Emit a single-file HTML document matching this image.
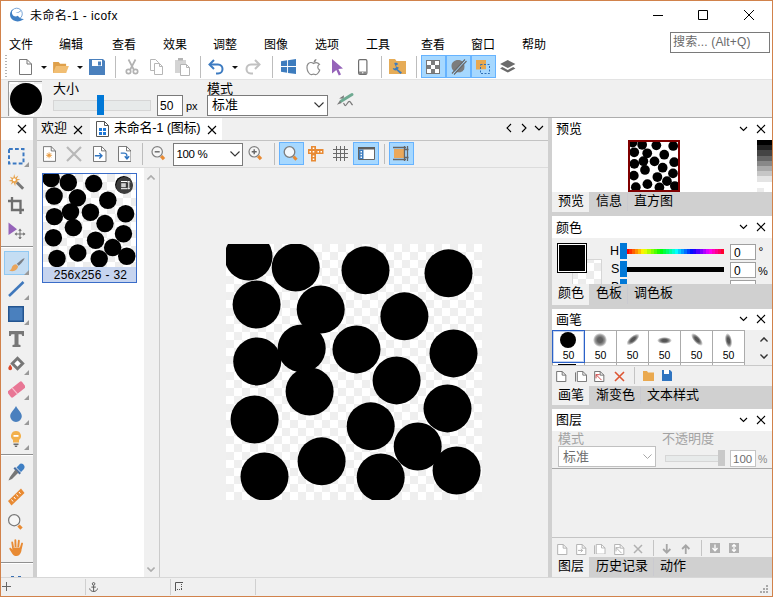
<!DOCTYPE html>
<html lang="zh-CN"><head><meta charset="utf-8"><title>未命名-1 - icofx</title>
<style>
html,body{margin:0;padding:0}
body{width:773px;height:597px;overflow:hidden;position:relative;background:#fff;font:12px/1 "Liberation Sans","Noto Sans CJK SC",sans-serif;color:#000}
.abs,.t,.b,svg.i{position:absolute}
.t{white-space:nowrap;line-height:16px;height:16px}
.b{box-sizing:border-box}
.g{color:#8e8e8e}
.vs{position:absolute;width:1px;background:#bdbdbd}
.tog{position:absolute;box-sizing:border-box;background:#a6d8ff;border:1px solid #66b3ff}
.inp{position:absolute;box-sizing:border-box;background:#fff;border:1px solid #7a7a7a}
.hdr{position:absolute;left:552px;width:220px;background:#fff}
.tabs{position:absolute;left:552px;width:220px;background:#d0d0d0}
.tabon{position:absolute;left:552px;background:#f0f0f0}
.cell{position:absolute;box-sizing:border-box;width:33px;height:33px;background:#fff;border:1px solid #ababab}
</style></head><body>
<!-- title bar -->
<svg class="i" style="left:8px;top:7px" width="17" height="16" viewBox="0 0 17 16"><circle cx="8.700" cy="6.800" r="5.600" fill="none" stroke="#6a9bd2" stroke-width=".9"/><path d="M5 2C1.300 4.500 .800 10.500 5.300 13.300c3.300 2 7.500 1.200 10.700-1.300-2.600.300-4.700-1-6.200-3.200C8 10.200 5.300 9.500 4.300 7.300 3.500 5.500 3.900 3.500 5 2z" fill="#3f7fc4"/><path d="M7.500 5.300c2 .300 4.300-.500 5.700-2.300-.700 2.300-3.300 3.400-5.700 2.300z" fill="#3f7fc4"/></svg>
<span class="t" style="left:30px;top:8px;letter-spacing:.45px">未命名-1 - icofx</span>
<svg class="i" style="left:652px;top:9px" width="104" height="12" viewBox="0 0 104 12" fill="none" stroke="#000" stroke-width="1"><path d="M1 6.500h10M46.500 1.500h9v9h-9zM92 1l10 10M102 1l-10 10"/></svg>
<!-- menu -->
<span class="t" style="left:9px;top:37px">文件</span>
<span class="t" style="left:59px;top:37px">编辑</span>
<span class="t" style="left:112px;top:37px">查看</span>
<span class="t" style="left:163px;top:37px">效果</span>
<span class="t" style="left:213px;top:37px">调整</span>
<span class="t" style="left:264px;top:37px">图像</span>
<span class="t" style="left:315px;top:37px">选项</span>
<span class="t" style="left:366px;top:37px">工具</span>
<span class="t" style="left:421px;top:37px">查看</span>
<span class="t" style="left:471px;top:37px">窗口</span>
<span class="t" style="left:522px;top:37px">帮助</span>
<div class="inp" style="left:670px;top:32px;width:100px;height:21px"></div>
<span class="t" style="left:673px;top:34px;color:#6a6a6a;letter-spacing:.15px">搜索... (Alt+Q)</span>
<!-- main toolbar -->

<svg class="i" style="left:5px;top:55px" width="2" height="24" viewBox="0 0 2 24" fill="#b3b3b3"><path d="M0 0h2v1H0zM0 3h2v1H0zM0 6h2v1H0zM0 9h2v1H0zM0 12h2v1H0zM0 15h2v1H0zM0 18h2v1H0zM0 21h2v1H0z"/></svg>
<svg class="i" style="left:18px;top:58px" width="16" height="18" viewBox="0 0 16 18"><path d="M1.500 1.500h7.500l4.500 4.500v10.500h-12z" fill="#fff" stroke="#777"/><path d="M9 1.500v4.500h4.500" fill="none" stroke="#777"/></svg>
<svg class="i" style="left:41px;top:66px" width="6" height="3" viewBox="0 0 6 3"><path d="M0 0h6L3 3z" fill="#111"/></svg>
<svg class="i" style="left:53px;top:61px" width="16" height="13" viewBox="0 0 17 14"><path d="M0 1h6l1.500 2H14v10H0z" fill="#dfa04a"/><path d="M3 5.500h14L14 13H0z" fill="#f1be73"/></svg>
<svg class="i" style="left:77px;top:66px" width="6" height="3" viewBox="0 0 6 3"><path d="M0 0h6L3 3z" fill="#111"/></svg>
<svg class="i" style="left:89px;top:59px" width="16" height="16" viewBox="0 0 16 16"><path d="M0 0h14l2 2v14H0z" fill="#4a80bd"/><path d="M3 1h10v6H3z" fill="#fff"/><path d="M9 2.500h3v4H9z" fill="#4a80bd"/></svg>
<div class="vs" style="left:115px;top:56px;height:22px"></div>
<svg class="i" style="left:125px;top:59px" width="14" height="16" viewBox="0 0 14 16" fill="none" stroke="#b2b2b2" stroke-width="1.700"><path d="M3.500 .500l5.500 10.500M10.500 .500L5 11"/><circle cx="3.500" cy="12.500" r="2.200"/><circle cx="10.500" cy="12.500" r="2.200"/></svg>
<svg class="i" style="left:149px;top:59px" width="15" height="16" viewBox="0 0 15 16" fill="#fff" stroke="#b6b6b6"><path d="M1.500 .500h5l3 3v8h-8z"/><path d="M5.500 4.500h5l3 3v8h-8z"/><path d="M10.500 4.500v3h3" fill="none"/></svg>
<svg class="i" style="left:174px;top:58px" width="17" height="18" viewBox="0 0 17 18"><path d="M1 2h11v13H1z" fill="#d4d4d4"/><path d="M4 0h5v2.500H4z" fill="#b4b4b4"/><path d="M6.500 6.500h6l3 3v8h-9z" fill="#fff" stroke="#b4b4b4"/><path d="M12.500 6.500v3h3" fill="none" stroke="#b4b4b4"/></svg>
<div class="vs" style="left:200px;top:56px;height:22px"></div>
<svg class="i" style="left:208px;top:59px" width="17" height="16" viewBox="0 0 17 16" fill="none" stroke="#3d7bc1" stroke-width="2"><path d="M6 1L1.500 5.500 6 10"/><path d="M2 5.500h8c6 0 6 9 0 9H8"/></svg>
<svg class="i" style="left:232px;top:66px" width="6" height="3" viewBox="0 0 6 3"><path d="M0 0h6L3 3z" fill="#111"/></svg>
<svg class="i" style="left:244px;top:59px" width="17" height="16" viewBox="0 0 17 16" fill="none" stroke="#c1c1c1" stroke-width="2"><path d="M11 1l4.500 4.500L11 10"/><path d="M15 5.500H7c-6 0-6 9 0 9h2"/></svg>
<div class="vs" style="left:272px;top:56px;height:22px"></div>
<svg class="i" style="left:281px;top:59px" width="15" height="15" viewBox="0 0 16 16" fill="#3d7cbe"><path d="M0 2.300L6.500 1.400v6.100H0zM7.500 1.200L16 0v7.500H7.500zM0 8.500h6.500v6.100L0 13.700zM7.500 8.500H16V16l-8.500-1.200z"/></svg>
<svg class="i" style="left:306px;top:58px" width="15" height="18" viewBox="0 0 15 18" fill="none" stroke="#8a8a8a" stroke-width="1.200"><path d="M7.500 5.500C6 4.300 3.500 4.300 2 6 .300 8 .800 12 2.500 14.500c1 1.500 2.300 2.500 3.500 2 1-.400 2-.400 3 0 1.200.500 2.500-.500 3.500-2 .600-.900 1-1.700 1.200-2.500-2.400-1-2.700-4.300-.200-5.700C12 4.600 9.500 4.200 7.500 5.500z"/><path d="M7.500 4.500c0-2 1.300-3.300 3-3.500 0 2-1.300 3.300-3 3.500z" fill="#8a8a8a" stroke="none"/></svg>
<svg class="i" style="left:331px;top:59px" width="13" height="17" viewBox="0 0 13 17"><path d="M1 0l11 9.500-4.600.600 2.600 5.400-2.200 1-2.500-5.500L1 14.500z" fill="#9563b9"/></svg>
<svg class="i" style="left:358px;top:59px" width="10" height="16" viewBox="0 0 10 16"><rect x=".6" y=".6" width="8.300" height="14.800" rx="1.300" fill="#fff" stroke="#6e6e6e" stroke-width="1.200"/><path d="M1 12.500h7.500v2.500H1z" fill="#8a8a8a"/><circle cx="4.750" cy="13.800" r=".7" fill="#fff"/></svg>
<div class="vs" style="left:381px;top:56px;height:22px"></div>
<svg class="i" style="left:389px;top:59px" width="17" height="15" viewBox="0 0 17 15"><path d="M0 0h6l1.500 2H17v13H0z" fill="#e6ac57"/><path d="M5.200 4.200c1.400-.8 3.200-.3 4 1l-2 1.100.4 1.700 2 .3c.1.900-.3 1.500-.9 2l4.300 3.200-1.500 1.500-4-3.700c-1.800.6-3.500-.6-3.700-2.300l2 .6 1.300-1.300z" fill="#3d7cbe"/></svg>
<div class="vs" style="left:416px;top:56px;height:22px"></div>
<div class="tog" style="left:421px;top:55px;width:25px;height:23px"></div>
<div class="tog" style="left:446px;top:55px;width:25px;height:23px"></div>
<div class="tog" style="left:471px;top:55px;width:25px;height:23px"></div>
<svg class="i" style="left:426px;top:60px" width="14" height="14" viewBox="0 0 14 14"><path d="M0 0h14v14H0z" fill="#fff"/><path d="M0 0h14v14H0z" fill="none" stroke="#757575" stroke-width="2"/><path d="M5 1h4v4H5zM1 5h4v4H1zM9 5h4v4H9zM5 9h4v4H5z" fill="#7d7d7d"/></svg>
<svg class="i" style="left:450px;top:58px" width="17" height="17" viewBox="0 0 17 17"><path d="M8 2c4 0 6.500 2.500 6.500 6.500 0 1-.3 1.500-.3 2.500s-1 1-1.200 1.700-1 .5-1.500 1-1 .3-1.700.6-1.300 0-2 0C4 14.300 1.500 11.500 1.500 8S4.500 2 8 2z" fill="#7c7c7c"/><path d="M2 15.500L15 1.500M4 16.500L16.500 3" stroke="#6a6a6a" stroke-width="1.200"/><path d="M3 16L15.700 2.300" stroke="#a6d8ff" stroke-width=".9"/></svg>
<svg class="i" style="left:476px;top:60px" width="15" height="15" viewBox="0 0 15 15"><path d="M0 0h10v9.500H0z" fill="#e9a84f"/><path d="M10 4v5.500H4.500V14h9V4z" fill="#a6d8ff"/><path d="M4.500 4.500h9v9h-9z" fill="none" stroke="#2f6fb7" stroke-dasharray="2 1.500"/></svg>
<svg class="i" style="left:500px;top:60px" width="15.500" height="13.500" viewBox="0 0 17 15" fill="#6b6b6b"><path d="M8.500 0L17 4.500 8.500 9 0 4.500z"/><path d="M2.500 7.800L0 9.500 8.500 14 17 9.500l-2.500-1.700-6 3.200z"/></svg>

<!-- options bar -->
<div class="abs" style="left:1px;top:79px;width:771px;height:1px;background:#e3e3e3;z-index:1"></div>
<div class="abs" style="left:1px;top:79px;width:771px;height:38px;background:#f0f0f0"></div>
<div class="b" style="left:8px;top:81px;width:34px;height:34.500px;background:conic-gradient(#fff 25%,#f1f1f1 0 50%,#fff 0 75%,#f1f1f1 0) 1px 2px/16px 16px;border-left:1px solid #999;border-top:1px solid #999"></div>
<div class="abs" style="left:10px;top:83px;width:32px;height:32px;border-radius:50%;background:#000"></div>
<span class="t" style="left:53px;top:81px;font-size:13px">大小</span>
<div class="b" style="left:53px;top:100px;width:98px;height:11px;background:#e7eaea;border:1px solid #d6d6d6"></div>
<div class="abs" style="left:97px;top:95px;width:7px;height:20px;background:#0078d7"></div>
<div class="inp" style="left:157px;top:95px;width:26px;height:21px"></div>
<span class="t" style="left:160px;top:98px">50</span>
<span class="t" style="left:186px;top:98px;font-size:11px">px</span>
<span class="t" style="left:207px;top:81px;font-size:13px">模式</span>
<div class="inp" style="left:207px;top:95px;width:121px;height:21px"></div>
<span class="t" style="left:212px;top:97px;font-size:13px">标准</span>
<svg class="i" style="left:314px;top:102px" width="10" height="6" viewBox="0 0 10 6" fill="none" stroke="#333" stroke-width="1.100"><path d="M.500 .500l4.500 4.500 4.500-4.500"/></svg>
<svg class="i" style="left:330px;top:86px" width="32" height="26" viewBox="0 0 32 26"><path d="M9.100 12.600l4.900-3.300-.400 3.500z" fill="#7a7a7a"/><path d="M13.500 17c.800 1 1 2.600 1.800 2.600 1.300 0 2.600-4.300 4-4.300 1.200 0 2 2.500 3.300 3.900" fill="none" stroke="#7a7a7a" stroke-width="1.200"/><path d="M11 15.200L22 8.500" stroke="#6faa92" stroke-width="3" stroke-linecap="round"/><path d="M6.900 18.700l3-3.900 1.700 2.300z" fill="#7a7a7a"/></svg>
<div class="abs" style="left:1px;top:117px;width:771px;height:1px;background:#adadad"></div>
<!-- left toolbox -->
<div class="abs" style="left:1px;top:118px;width:32px;height:22px;background:#fff"></div>
<div class="abs" style="left:1px;top:140px;width:32px;height:437px;background:#f0f0f0"></div>
<svg class="i" style="left:17px;top:124px" width="10" height="10" viewBox="0 0 10 10" stroke="#000" stroke-width="1.100"><path d="M1 1l8 8M9 1l-8 8"/></svg>

<div class="abs" style="left:1px;top:246px;width:32px;height:1px;background:#909090"></div><div class="abs" style="left:1px;top:247px;width:32px;height:1px;background:#fff"></div>
<div class="abs" style="left:1px;top:454px;width:32px;height:1px;background:#909090"></div><div class="abs" style="left:1px;top:455px;width:32px;height:1px;background:#fff"></div>
<div class="abs" style="left:1px;top:562px;width:32px;height:1px;background:#909090"></div><div class="abs" style="left:1px;top:563px;width:32px;height:1px;background:#fff"></div>
<div class="tog" style="left:4px;top:251px;width:25px;height:24px;background:#c4ddf3;border-color:#90c8f2"></div>
<svg class="i" style="left:8px;top:148px" width="17" height="17" viewBox="0 0 17 17" fill="none" stroke="#3a78c2" stroke-width="2" stroke-dasharray="3.800 2.200"><path d="M1 1h14.500v14.500H1z"/></svg>
<svg class="i" style="left:8px;top:174px" width="17" height="16" viewBox="0 0 18 18"><path d="M6.500 0l1 4.200 3.500-2.500-1.800 3.800 4.300.5-4 1.700 2.500 3.300-3.800-1.500-.7 4.200-1.700-4-3.300 2.500 1.700-3.700L0 7.800l4-1.500L1.500 3l3.800 1.500z" fill="#e8a24a"/><circle cx="6.500" cy="6.500" r="1.700" fill="#fff"/><path d="M9.500 9.500l7 7" stroke="#777" stroke-width="3.300"/></svg>
<svg class="i" style="left:8px;top:197px" width="16" height="17" viewBox="0 0 16 17" fill="none" stroke="#6e6e6e" stroke-width="2.300"><path d="M4 0v13h12M0 4h12.500v13"/></svg>
<svg class="i" style="left:8px;top:222px" width="18" height="17" viewBox="0 0 18 17"><path d="M.500 .500l8.500 6.700L.500 13z" fill="#9563b9"/><path d="M12 8v8M8 12h8" stroke="#6d6d6d" stroke-width="1"/><path d="M12 6.500l1.800 2.200h-3.600zM12 17.500l1.800-2.200h-3.600zM6.500 12l2.200-1.800v3.600zM17.500 12l-2.200-1.800v3.600z" fill="#6d6d6d"/></svg>
<svg class="i" style="left:9px;top:258px" width="16" height="14" viewBox="0 0 19 17"><path d="M18.500 .300c.8.800-4 6.500-7 9L9.300 7C12 4.500 17.700-.5 18.500 .300z" fill="#7a7f86"/><path d="M8.500 7.700l2.300 2.300c-.3 2.500-1.800 4.500-4.300 5.500-2 .8-4.500.6-6.500-.4 2-.5 2.600-1.300 3-3 .5-2.500 3-4.400 5.500-4.400z" fill="#e9a55c"/></svg>
<svg class="i" style="left:8px;top:281px" width="17" height="16" viewBox="0 0 17 16"><path d="M1 15L15.500 1" stroke="#3f78bc" stroke-width="2.500"/></svg>
<svg class="i" style="left:8px;top:306px" width="16" height="16" viewBox="0 0 16 16"><path d="M.750 .750h14.500v14.500H.750z" fill="#4a80be" stroke="#23548f" stroke-width="1.500"/></svg>
<svg class="i" style="left:9px;top:331px" width="15" height="16" viewBox="0 0 15 16"><path d="M0 0h15v5h-1.700l-.8-1.700H9.500v10.200l2 .5V16h-8v-2l2-.5V3.300H2.500L1.700 5H0z" fill="#777"/></svg>
<svg class="i" style="left:7.500px;top:356px" width="17" height="16" viewBox="0 0 17 16"><path d="M9.500 2.300l5.200 5.200-5.200 5.200-5.200-5.200z" fill="#fff" stroke="#777" stroke-width="2.900"/><path d="M2.200 8.500C1 10.200 .300 11.300 .300 12.300a1.900 1.900 0 003.800 0c0-1-.700-2.100-1.900-3.800z" fill="#d9482b"/></svg>
<svg class="i" style="left:8px;top:381px" width="17" height="17" viewBox="0 0 17 17"><rect x="-1" y="5" width="18" height="8" rx="1.600" transform="rotate(-38 8.500 8.500) translate(.5 -.5)" fill="#e87795"/><path d="M4.300 7.200l5.300 6" stroke="#f7c0cf" stroke-width="1.200"/></svg>
<svg class="i" style="left:10px;top:406px" width="12" height="16" viewBox="0 0 12 16"><path d="M6 0c1.500 3.500 5.800 6.500 5.800 10.200a5.800 5.800 0 01-11.600 0C.200 6.500 4.500 3.500 6 0z" fill="#4a80be"/></svg>
<svg class="i" style="left:11px;top:431px" width="10" height="16" viewBox="0 0 10 16"><path d="M5 0a5 5 0 00-3 9v2.500h6V9a5 5 0 00-3-9z" fill="#f2b04c"/><path d="M2.500 4h5v1.800h-5z" fill="#fff"/><path d="M2.500 12.500h5v1.500h-5zM3.500 14.500h3L6 16H4z" fill="#6d6d6d"/></svg>
<svg class="i" style="left:8px;top:463px" width="17" height="18" viewBox="0 0 17 18"><path d="M13 .500a3.500 3.500 0 012.500 6L13 9 8.500 4.500 11 2A3 3 0 0113 .500z" fill="#3f7fc4"/><path d="M7 4l6 6-1.500 1.500-6-6z" fill="#4a6fa0"/><path d="M7.500 6.500l3 3L4 16l-3.500 1.500L2 14z" fill="#777"/></svg>
<svg class="i" style="left:8px;top:488px" width="17" height="18" viewBox="0 0 17 18"><path d="M13 .500l3.500 4.500-13 12.500L0 13z" fill="#e88a33"/><path d="M3.500 11.500l1.500 2M6 9l1.500 2M8.500 6.500l1.500 2M11 4l1.500 2" stroke="#fff" stroke-width="1"/></svg>
<svg class="i" style="left:7px;top:513px" width="17" height="18" viewBox="0 0 17 18"><circle cx="7.200" cy="7.200" r="5.600" fill="#f6f6f6" stroke="#777" stroke-width="1.200"/><path d="M11.500 12.500l3 3.200" stroke="#e88a33" stroke-width="3.200"/></svg>
<svg class="i" style="left:8.500px;top:539px" width="15" height="17" viewBox="0 0 15 17" fill="#e88a33"><path d="M3.200 9.500L2.300 3.500a.9.9 0 011.800-.3l.9 5zM5.600 8L5.400 1.200a.95.95 0 011.900 0L7.500 8zM8.300 8l.6-6.300a.95.95 0 011.900.2L10.200 8.300zM10.800 8.800l1.500-4.700a.9.900 0 011.700.5L12.700 10z"/><path d="M3 8.500h9.300c.6 1.500.3 4-.8 5.800-.8 1.500-2 2.700-4 2.700s-3.200-.8-4.200-2.300L.5 10.300c-.6-1 .6-2 1.500-1.200l1.500 1.700z"/></svg>
<svg class="i" style="left:11px;top:576px" width="10" height="2" viewBox="0 0 10 2"><path d="M0 0h3v1.200H0zM7 0h3v1.200H7z" fill="#3a70b4"/></svg>
<svg class="i" style="left:23.500px;top:162px" width="5" height="5" viewBox="0 0 4 4"><path d="M4 0v4H0z" fill="#999"/></svg><svg class="i" style="left:23.500px;top:269.5px" width="5" height="5" viewBox="0 0 4 4"><path d="M4 0v4H0z" fill="#999"/></svg><svg class="i" style="left:23.500px;top:294.5px" width="5" height="5" viewBox="0 0 4 4"><path d="M4 0v4H0z" fill="#999"/></svg><svg class="i" style="left:23.500px;top:319.5px" width="5" height="5" viewBox="0 0 4 4"><path d="M4 0v4H0z" fill="#999"/></svg><svg class="i" style="left:23.500px;top:369.5px" width="5" height="5" viewBox="0 0 4 4"><path d="M4 0v4H0z" fill="#999"/></svg><svg class="i" style="left:23.500px;top:394.5px" width="5" height="5" viewBox="0 0 4 4"><path d="M4 0v4H0z" fill="#999"/></svg><svg class="i" style="left:23.500px;top:419.5px" width="5" height="5" viewBox="0 0 4 4"><path d="M4 0v4H0z" fill="#999"/></svg><svg class="i" style="left:23.500px;top:444.5px" width="5" height="5" viewBox="0 0 4 4"><path d="M4 0v4H0z" fill="#999"/></svg>
<div class="abs" style="left:33px;top:118px;width:4px;height:459px;background:#cfcfcf"></div>
<!-- document tabs -->
<div class="abs" style="left:37px;top:118px;width:511px;height:22px;background:#f0f0f0"></div>
<div class="abs" style="left:90px;top:118px;width:132px;height:22px;background:#fff"></div>
<span class="t" style="left:41px;top:120px;font-size:13px">欢迎</span>
<svg class="i" style="left:73px;top:125px" width="10" height="10" viewBox="0 0 10 10" stroke="#000" stroke-width="1.100"><path d="M1 1l8 8M9 1l-8 8"/></svg>
<svg class="i" style="left:96px;top:121px" width="13" height="16" viewBox="0 0 13 16"><path d="M.500 .500h8l4 4v11h-12z" fill="#fff" stroke="#555"/><path d="M8.500 .500v4h4" fill="none" stroke="#555"/><path d="M3 7h3v3H3zM7 7h3v3H7zM3 11h3v3H3zM7 11h3v3H7z" fill="#1e78d7"/></svg>
<span class="t" style="left:114px;top:120px;font-size:13px;letter-spacing:-.25px">未命名-1 (图标)</span>
<svg class="i" style="left:207px;top:125px" width="10" height="10" viewBox="0 0 10 10" stroke="#000" stroke-width="1.100"><path d="M1 1l8 8M9 1l-8 8"/></svg>
<svg class="i" style="left:505px;top:123px" width="40" height="10" viewBox="0 0 40 10" fill="none" stroke="#000" stroke-width="1.100"><path d="M6 1l-4 4 4 4M17 1l4 4-4 4M30 3l4 4 4-4"/></svg>
<div class="abs" style="left:37px;top:140px;width:511px;height:1px;background:#c3c3c3"></div>
<div class="abs" style="left:37px;top:141px;width:511px;height:26px;background:#f0f0f0"></div>

<svg class="i" style="left:43px;top:146px" width="13" height="16" viewBox="0 0 15 18"><path d="M.500 .500h9l5 5v12h-14z" fill="#fff" stroke="#666"/><path d="M9.500 .500v5h5" fill="none" stroke="#666"/><path d="M7 7v7M3.500 10.500h7M4.500 8l5 5M9.500 8l-5 5" stroke="#eaa04a" stroke-width="1"/><circle cx="7" cy="10.500" r="1.800" fill="#eaa04a"/></svg>
<svg class="i" style="left:66px;top:146px" width="16" height="16" viewBox="0 0 16 16" stroke="#b8b8b8" stroke-width="2.200"><path d="M1 1l14 14M15 1L1 15"/></svg>
<svg class="i" style="left:93px;top:146px" width="13.500" height="16" viewBox="0 0 15 18"><path d="M.500 .500h9l5 5v12h-14z" fill="#fff" stroke="#666"/><path d="M9.500 .500v5h5" fill="none" stroke="#666"/><path d="M2 11h8M7 8l3 3-3 3" fill="none" stroke="#2f74c0" stroke-width="1.500"/></svg>
<svg class="i" style="left:117.500px;top:146px" width="13.500" height="16" viewBox="0 0 15 18"><path d="M.500 .500h9l5 5v12h-14z" fill="#fff" stroke="#666"/><path d="M9.500 .500v5h5" fill="none" stroke="#666"/><path d="M3 8h4c3 0 3 2 3 6M7.500 11.500L10 14.500l2.500-3" fill="none" stroke="#2f74c0" stroke-width="1.500"/></svg>
<div class="vs" style="left:142px;top:143px;height:22px"></div>
<svg class="i" style="left:151px;top:146px" width="16" height="16" viewBox="0 0 16 16"><circle cx="6.200" cy="5.800" r="5.200" fill="#f6f6f6" stroke="#808080" stroke-width="1.200"/><path d="M3.700 5.800h5" stroke="#666" stroke-width="1.400"/><path d="M10.200 10.200l2.800 3" stroke="#e88a33" stroke-width="3.200"/></svg>
<div class="inp" style="left:173px;top:143px;width:70px;height:23px"></div>
<span class="t" style="left:176.500px;top:146px;font-size:11.500px;letter-spacing:-.35px">100 %</span>
<svg class="i" style="left:230px;top:151px" width="10" height="6" viewBox="0 0 10 6" fill="none" stroke="#333" stroke-width="1.100"><path d="M.500 .500l4.500 4.500 4.500-4.500"/></svg>
<svg class="i" style="left:248px;top:146px" width="16" height="16" viewBox="0 0 16 16"><circle cx="6.200" cy="5.800" r="5.200" fill="#f6f6f6" stroke="#808080" stroke-width="1.200"/><path d="M3.700 5.800h5M6.200 3.300v5" stroke="#666" stroke-width="1.400"/><path d="M10.200 10.200l2.800 3" stroke="#e88a33" stroke-width="3.200"/></svg>
<div class="vs" style="left:274px;top:143px;height:22px"></div>
<div class="tog" style="left:279px;top:142px;width:25px;height:23px"></div>
<svg class="i" style="left:283px;top:145px" width="17" height="17" viewBox="0 0 17 17"><circle cx="6.500" cy="7" r="5.300" fill="#f4f8fc" stroke="#7d7d7d" stroke-width="1.300"/><path d="M10.500 11.500l3 3.300" stroke="#e88a33" stroke-width="3"/></svg>
<svg class="i" style="left:308px;top:146px" width="16" height="16" viewBox="0 0 16 16"><path d="M0 3h15.500v5H0zM3 0h5v15.500H3z" fill="#e88a33"/><path d="M1.500 5h1.500v1.500H1.500zM4.700 5h1.600v1.500H4.700zM9.500 5H11v1.500H9.500zM12.500 5H14v1.500H12.500zM4.700 1.500h1.600V3H4.700zM4.700 9.500h1.600V11H4.700zM4.700 12.500h1.600V14H4.700z" fill="#fff"/></svg>
<svg class="i" style="left:333px;top:146px" width="15" height="15" viewBox="0 0 15 15" stroke="#6a6a6a" stroke-width="1"><path d="M0 3.500h15M0 7.500h15M0 11.500h15M3.500 0v15M7.500 0v15M11.500 0v15"/></svg>
<div class="tog" style="left:353px;top:142px;width:26px;height:23px"></div>
<svg class="i" style="left:358px;top:147px" width="17" height="13" viewBox="0 0 17 13"><path d="M.500 .500h16v12H.500z" fill="#fff" stroke="#666" stroke-width="1"/><path d="M0 0h17v2.500H0z" fill="#5e5e5e"/><path d="M1 2.500h4.500V12H1z" fill="#3d7cbe"/><path d="M2.500 4h1.500v1.500H2.500zM2.500 6.700h1.500v1.500H2.500zM2.500 9.400h1.500v1.500H2.500z" fill="#fff"/></svg>
<div class="vs" style="left:384px;top:144px;height:20px"></div>
<div class="tog" style="left:389px;top:142px;width:25px;height:23px"></div>
<svg class="i" style="left:393px;top:146px" width="17" height="15" viewBox="0 0 17 15"><path d="M1 3h10v9H1z" fill="#eaa85a"/><path d="M0 1.500h13M0 13.500h13M14.500 0v15M11.500 0v15" stroke="#666" stroke-width="1.300" fill="none"/><path d="M11.500 3.500h4M11.500 11.500h4" stroke="#666" stroke-width="1.300"/></svg>

<div class="abs" style="left:37px;top:167px;width:511px;height:1px;background:#dcdcdc"></div>
<!-- image list -->
<div class="abs" style="left:144px;top:168px;width:15px;height:409px;background:#f0f0f0"></div>
<div class="abs" style="left:159px;top:168px;width:1px;height:409px;background:#cbcbcb"></div>
<div class="abs" style="left:160px;top:168px;width:388px;height:409px;background:#f0f0f0"></div>
<svg class="i" style="left:147px;top:174.500px" width="8" height="5" viewBox="0 0 10 6" fill="none" stroke="#adadad" stroke-width="2"><path d="M.500 5.500l4.500-4.500 4.500 4.500"/></svg>
<svg class="i" style="left:147px;top:566.500px" width="8" height="5" viewBox="0 0 10 6" fill="none" stroke="#adadad" stroke-width="2"><path d="M.500 .500l4.500 4.500 4.500-4.500"/></svg>
<div class="b" style="left:42px;top:173px;width:95px;height:110px;border:1px solid #3a6cc8;background:#c6d4ef"></div>
<div class="abs" style="left:43px;top:174px;width:93px;height:93px;background:conic-gradient(#fff 25%,#ededed 0 50%,#fff 0 75%,#ededed 0) 0 0/16px 16px"></div>
<svg class="abs" style="left:43px;top:174px" width="93" height="93" viewBox="0 0 256 256" ><circle cx="22.5" cy="12.5" r="24"/><circle cx="69.7" cy="23.5" r="24"/><circle cx="139.5" cy="26.3" r="24"/><circle cx="222.5" cy="29.3" r="24"/><circle cx="30.6" cy="60.6" r="24"/><circle cx="94.7" cy="65.5" r="24"/><circle cx="178.4" cy="72.3" r="24"/><circle cx="75.7" cy="104.4" r="24"/><circle cx="130.5" cy="105.4" r="24"/><circle cx="227.5" cy="109.4" r="24"/><circle cx="31.2" cy="117.4" r="24"/><circle cx="170.6" cy="136.4" r="24"/><circle cx="83.6" cy="147.5" r="24"/><circle cx="221.5" cy="164.4" r="24"/><circle cx="28.6" cy="175.5" r="24"/><circle cx="144.7" cy="182.3" r="24"/><circle cx="191.7" cy="202.5" r="24"/><circle cx="95.6" cy="217.3" r="24"/><circle cx="38.5" cy="232.5" r="24"/><circle cx="154.7" cy="233.5" r="24"/><circle cx="230.6" cy="226.5" r="24"/></svg>
<div class="abs" style="left:115.500px;top:176.500px;width:17.500px;height:17.500px;border-radius:50%;background:#3c3c3c"></div>
<svg class="i" style="left:116px;top:177px" width="17" height="17" viewBox="0 0 17 17" fill="none" stroke="#fff" stroke-width="1"><path d="M5.200 6.200h4.600v4H5.200z" fill="#cfcfcf" stroke="none"/><path d="M5 4.500h6.500M5 11.700h6.500M12.800 4.200v7.800"/><path d="M11.700 5.400l1.100-1.400 1.100 1.400M11.700 10.800l1.100 1.400 1.100-1.400" stroke-width=".8"/></svg>
<span class="t" style="left:44px;top:267px;width:93px;text-align:center;letter-spacing:.3px">256x256 - 32</span>
<!-- canvas -->
<div class="abs" style="left:226px;top:244px;width:256px;height:256px;background:conic-gradient(#fff 25%,#efefef 0 50%,#fff 0 75%,#efefef 0) 0 0/16px 16px"></div>
<svg class="abs" style="left:226px;top:244px" width="256" height="256" viewBox="0 0 256 256" ><circle cx="22.5" cy="12.5" r="24"/><circle cx="69.7" cy="23.5" r="24"/><circle cx="139.5" cy="26.3" r="24"/><circle cx="222.5" cy="29.3" r="24"/><circle cx="30.6" cy="60.6" r="24"/><circle cx="94.7" cy="65.5" r="24"/><circle cx="178.4" cy="72.3" r="24"/><circle cx="75.7" cy="104.4" r="24"/><circle cx="130.5" cy="105.4" r="24"/><circle cx="227.5" cy="109.4" r="24"/><circle cx="31.2" cy="117.4" r="24"/><circle cx="170.6" cy="136.4" r="24"/><circle cx="83.6" cy="147.5" r="24"/><circle cx="221.5" cy="164.4" r="24"/><circle cx="28.6" cy="175.5" r="24"/><circle cx="144.7" cy="182.3" r="24"/><circle cx="191.7" cy="202.5" r="24"/><circle cx="95.6" cy="217.3" r="24"/><circle cx="38.5" cy="232.5" r="24"/><circle cx="154.7" cy="233.5" r="24"/><circle cx="230.6" cy="226.5" r="24"/></svg>
<!-- right splitter & panels -->
<div class="abs" style="left:548px;top:118px;width:224px;height:459px;background:#d0d0d0"></div>

<!-- preview -->
<div class="hdr" style="top:118px;height:74px"></div>
<span class="t" style="left:556px;top:121px;font-size:13px">预览</span>
<svg class="i" style="left:739px;top:124px" width="28" height="10" viewBox="0 0 28 10" fill="none" stroke="#000" stroke-width="1.100"><path d="M1 3l3.500 3.500L8 3M18 1l8 8M26 1l-8 8"/></svg>
<div class="abs" style="left:628px;top:140px;width:52px;height:52px;background:#fff"></div>
<svg class="abs" style="left:628px;top:140px" width="52" height="52" viewBox="0 0 256 256" ><circle cx="22.5" cy="12.5" r="24"/><circle cx="69.7" cy="23.5" r="24"/><circle cx="139.5" cy="26.3" r="24"/><circle cx="222.5" cy="29.3" r="24"/><circle cx="30.6" cy="60.6" r="24"/><circle cx="94.7" cy="65.5" r="24"/><circle cx="178.4" cy="72.3" r="24"/><circle cx="75.7" cy="104.4" r="24"/><circle cx="130.5" cy="105.4" r="24"/><circle cx="227.5" cy="109.4" r="24"/><circle cx="31.2" cy="117.4" r="24"/><circle cx="170.6" cy="136.4" r="24"/><circle cx="83.6" cy="147.5" r="24"/><circle cx="221.5" cy="164.4" r="24"/><circle cx="28.6" cy="175.5" r="24"/><circle cx="144.7" cy="182.3" r="24"/><circle cx="191.7" cy="202.5" r="24"/><circle cx="95.6" cy="217.3" r="24"/><circle cx="38.5" cy="232.5" r="24"/><circle cx="154.7" cy="233.5" r="24"/><circle cx="230.6" cy="226.5" r="24"/></svg>
<div class="b" style="left:628px;top:140px;width:52px;height:52px;border:2px solid #800000"></div>
<div class="abs" style="left:757px;top:140px;width:15px;height:5.400px;background:#000000"></div><div class="abs" style="left:757px;top:145.2px;width:15px;height:5.400px;background:#222222"></div><div class="abs" style="left:757px;top:150.4px;width:15px;height:5.400px;background:#444444"></div><div class="abs" style="left:757px;top:155.6px;width:15px;height:5.400px;background:#666666"></div><div class="abs" style="left:757px;top:160.8px;width:15px;height:5.400px;background:#888888"></div><div class="abs" style="left:757px;top:166px;width:15px;height:5.400px;background:#aaaaaa"></div><div class="abs" style="left:757px;top:171.2px;width:15px;height:5.400px;background:#c6c6c6"></div><div class="abs" style="left:757px;top:176.4px;width:15px;height:5.400px;background:#e4e4e4"></div><div class="abs" style="left:757px;top:181.6px;width:15px;height:5.400px;background:#ffffff"></div><div class="abs" style="left:757px;top:188px;width:7px;height:4px;background:#ececec"></div>
<div class="tabs" style="top:192px;height:20px"></div>
<div class="tabon" style="top:192px;width:37px;height:20px"></div>
<span class="t" style="left:558px;top:193px;font-size:13px">预览</span>
<span class="t" style="left:596px;top:193px;font-size:13px">信息</span>
<span class="t" style="left:634px;top:193px;font-size:13px">直方图</span>
<div class="abs" style="left:627px;top:193px;width:1px;height:18px;background:#cacad0"></div>
<!-- color -->
<div class="hdr" style="top:216px;height:22px"></div>
<div class="hdr" style="top:238px;height:46px;background:#f0f0f0"></div>
<span class="t" style="left:556px;top:220px;font-size:13px">颜色</span>
<svg class="i" style="left:739px;top:222px" width="28" height="10" viewBox="0 0 28 10" fill="none" stroke="#000" stroke-width="1.100"><path d="M1 3l3.500 3.500L8 3M18 1l8 8M26 1l-8 8"/></svg>
<div class="b" style="left:572px;top:259px;width:30px;height:25px;border:1px solid #d6d6d6;border-bottom:0;background:conic-gradient(#fff 25%,#ececec 0 50%,#fff 0 75%,#ececec 0) 5px 3px/16px 16px"></div>
<div class="b" style="left:557px;top:243px;width:30px;height:30px;border:1px solid #000;background:#000;box-shadow:inset 0 0 0 1px #fff"></div>
<span class="t" style="left:610px;top:243px;font-size:12.500px">H</span>
<span class="t" style="left:611px;top:261px;font-size:12.500px">S</span>
<div class="abs" style="left:626px;top:249px;width:97.500px;height:5px;background:linear-gradient(90deg,#ff0000 0.00% 3.12%,#ff2f00 3.12% 6.25%,#ff5f00 6.25% 9.38%,#ff8f00 9.38% 12.50%,#ffbf00 12.50% 15.62%,#ffef00 15.62% 18.75%,#dfff00 18.75% 21.88%,#afff00 21.88% 25.00%,#7fff00 25.00% 28.12%,#4fff00 28.12% 31.25%,#1fff00 31.25% 34.38%,#00ff0f 34.38% 37.50%,#00ff3f 37.50% 40.62%,#00ff6f 40.62% 43.75%,#00ff9f 43.75% 46.88%,#00ffcf 46.88% 50.00%,#00ffff 50.00% 53.12%,#00cfff 53.12% 56.25%,#009fff 56.25% 59.38%,#006fff 59.38% 62.50%,#003fff 62.50% 65.62%,#000fff 65.62% 68.75%,#1f00ff 68.75% 71.88%,#4f00ff 71.88% 75.00%,#7f00ff 75.00% 78.12%,#af00ff 78.12% 81.25%,#df00ff 81.25% 84.38%,#ff00ef 84.38% 87.50%,#ff00bf 87.50% 90.62%,#ff008f 90.62% 93.75%,#ff005f 93.75% 96.88%,#ff002f 96.88% 100.00%)"></div>
<div class="abs" style="left:626px;top:267px;width:97.500px;height:5px;background:#000"></div>
<span class="t" style="left:611px;top:279px;font-size:12.500px;height:5px;overflow:hidden">B</span>
<div class="abs" style="left:620px;top:243px;width:7px;height:15.500px;background:#0078d7"></div>
<div class="abs" style="left:620px;top:261.200px;width:7px;height:15.500px;background:#0078d7"></div>
<div class="abs" style="left:620px;top:279.200px;width:7px;height:5px;background:#0078d7"></div>
<div class="inp" style="left:730px;top:243.500px;width:25.500px;height:16px;border-color:#a0a0a0"></div>
<div class="inp" style="left:730px;top:261.500px;width:25.500px;height:16px;border-color:#a0a0a0"></div>
<div class="inp" style="left:730px;top:279.500px;width:25.500px;height:5px;border-color:#a0a0a0;border-bottom:0"></div>
<span class="t" style="left:734px;top:245px">0</span>
<span class="t" style="left:734px;top:263px">0</span>
<span class="t" style="left:758.500px;top:244px">°</span>
<span class="t" style="left:758px;top:262.500px;font-size:11px">%</span>
<div class="tabs" style="top:284px;height:21px"></div>
<div class="tabon" style="top:284px;width:37px;height:21px"></div>
<span class="t" style="left:558px;top:285px;font-size:13px">颜色</span>
<span class="t" style="left:596px;top:285px;font-size:13px">色板</span>
<span class="t" style="left:634px;top:285px;font-size:13px">调色板</span>
<div class="abs" style="left:627px;top:285px;width:1px;height:19px;background:#cacad0"></div>
<!-- brushes -->
<div class="hdr" style="top:309px;height:21px"></div>
<div class="hdr" style="top:330px;height:56px;background:#f0f0f0"></div>
<span class="t" style="left:556px;top:312px;font-size:13px">画笔</span>
<svg class="i" style="left:739px;top:314px" width="28" height="10" viewBox="0 0 28 10" fill="none" stroke="#000" stroke-width="1.100"><path d="M1 3l3.500 3.500L8 3M18 1l8 8M26 1l-8 8"/></svg>
<div class="cell" style="left:552px;top:330px"></div><div class="cell" style="left:552px;top:362px;height:4px;border-bottom:0"></div><span class="t" style="left:552px;top:347px;width:33px;text-align:center;font-size:10.500px">50</span><div class="cell" style="left:584px;top:330px"></div><div class="cell" style="left:584px;top:362px;height:4px;border-bottom:0"></div><span class="t" style="left:584px;top:347px;width:33px;text-align:center;font-size:10.500px">50</span><div class="cell" style="left:616px;top:330px"></div><div class="cell" style="left:616px;top:362px;height:4px;border-bottom:0"></div><span class="t" style="left:616px;top:347px;width:33px;text-align:center;font-size:10.500px">50</span><div class="cell" style="left:648px;top:330px"></div><div class="cell" style="left:648px;top:362px;height:4px;border-bottom:0"></div><span class="t" style="left:648px;top:347px;width:33px;text-align:center;font-size:10.500px">50</span><div class="cell" style="left:680px;top:330px"></div><div class="cell" style="left:680px;top:362px;height:4px;border-bottom:0"></div><span class="t" style="left:680px;top:347px;width:33px;text-align:center;font-size:10.500px">50</span><div class="cell" style="left:712px;top:330px"></div><div class="cell" style="left:712px;top:362px;height:4px;border-bottom:0"></div><span class="t" style="left:712px;top:347px;width:33px;text-align:center;font-size:10.500px">50</span><div class="b" style="left:552px;top:330px;width:33px;height:33px;border:1px solid #2b62c8;box-shadow:inset 0 0 0 1px rgba(60,110,210,.3)"></div><div class="abs" style="left:560px;top:332px;width:16px;height:16px;border-radius:50%;background:#000"></div><div class="abs" style="left:593px;top:332.500px;width:14px;height:14px;border-radius:50%;background:radial-gradient(#606060 25%,rgba(110,110,110,.7) 50%,rgba(150,150,150,0) 72%)"></div><div class="abs" style="left:624.5px;top:336.25px;width:16px;height:7px;border-radius:50%;background:radial-gradient(closest-side,#555 35%,rgba(110,110,110,.75) 65%,rgba(150,150,150,0) 100%);transform:rotate(-40deg)"></div><div class="abs" style="left:657px;top:336.5px;width:15px;height:7px;border-radius:50%;background:radial-gradient(closest-side,#555 35%,rgba(110,110,110,.75) 65%,rgba(150,150,150,0) 100%);transform:rotate(0deg)"></div><div class="abs" style="left:688.5px;top:336.25px;width:16px;height:7px;border-radius:50%;background:radial-gradient(closest-side,#555 35%,rgba(110,110,110,.75) 65%,rgba(150,150,150,0) 100%);transform:rotate(48deg)"></div><div class="abs" style="left:721px;top:336.5px;width:15px;height:7px;border-radius:50%;background:radial-gradient(closest-side,#555 35%,rgba(110,110,110,.75) 65%,rgba(150,150,150,0) 100%);transform:rotate(80deg)"></div><div class="abs" style="left:558px;top:364px;width:18px;height:2px;background:#000"></div><svg class="i" style="left:759.500px;top:337px" width="8" height="5" viewBox="0 0 10 6" fill="none" stroke="#333" stroke-width="1.800"><path d="M.500 5.500l4.500-4.500 4.500 4.500"/></svg><svg class="i" style="left:759.500px;top:353.500px" width="8" height="5" viewBox="0 0 10 6" fill="none" stroke="#333" stroke-width="1.800"><path d="M.500 .500l4.500 4.500 4.500-4.500"/></svg>
<div class="abs" style="left:552px;top:365px;width:220px;height:1px;background:#c9c9c9"></div>
<div class="abs" style="left:552px;top:366px;width:220px;height:20px;background:#f0f0f0"></div>
<svg class="i" style="left:556px;top:370.5px" width="10.500" height="11" viewBox="0 0 11 12" fill="none" stroke="#6e6e6e" stroke-width="1.050"><path d="M.500 .500h6l4 4v7h-10z" fill="#fff"/><path d="M6.500 .500v4h4"/></svg><svg class="i" style="left:575px;top:370.500px" width="12" height="11" viewBox="0 0 13 12" fill="none" stroke="#6e6e6e"><path d="M.500 1.500v10"/><path d="M2.500 .500h6l4 4v7h-10z" fill="#fff"/><path d="M8.500 .500v4h4"/></svg><svg class="i" style="left:594px;top:370.5px" width="10.500" height="11" viewBox="0 0 11 12" fill="none" stroke="#6e6e6e" stroke-width="1.050"><path d="M.500 .500h6l4 4v7h-10z" fill="#fff"/><path d="M6.500 .500v4h4"/><path d="M2 4l6 6M2 4h4M2 4v4" stroke="#c44"/></svg><svg class="i" style="left:614px;top:371px" width="11" height="11" viewBox="0 0 11 11" stroke="#dd5533" stroke-width="1.600"><path d="M1 1l9 9M10 1l-9 9"/></svg><div class="vs" style="left:634px;top:367px;height:17px;background:#c4c4c4"></div><svg class="i" style="left:643px;top:371px" width="11" height="10" viewBox="0 0 11 10"><path d="M0 0h4l1 1.500h6V10H0z" fill="#eaa94f"/></svg><svg class="i" style="left:662px;top:370px" width="10" height="11" viewBox="0 0 10 11"><path d="M0 0h8l2 2v9H0z" fill="#2f74c0"/><path d="M2 0h5v4H2z" fill="#fff"/><path d="M1.500 6.500h7V11h-7z" fill="#2f74c0"/></svg>
<div class="tabs" style="top:386px;height:19px"></div>
<div class="tabon" style="top:386px;width:37px;height:19px"></div>
<span class="t" style="left:558px;top:387px;font-size:13px">画笔</span>
<span class="t" style="left:596px;top:387px;font-size:13px">渐变色</span>
<span class="t" style="left:647px;top:387px;font-size:13px">文本样式</span>
<div class="abs" style="left:640px;top:387px;width:1px;height:17px;background:#cacad0"></div>
<!-- layers -->
<div class="hdr" style="top:409px;height:22px"></div>
<div class="hdr" style="top:431px;height:126px;background:#f0f0f0"></div>
<span class="t" style="left:556px;top:412px;font-size:13px">图层</span>
<svg class="i" style="left:739px;top:415px" width="28" height="10" viewBox="0 0 28 10" fill="none" stroke="#000" stroke-width="1.100"><path d="M1 3l3.500 3.500L8 3M18 1l8 8M26 1l-8 8"/></svg>
<span class="t" style="left:558px;top:431px;color:#a3a3a3;font-size:13px">模式</span>
<span class="t" style="left:662px;top:431px;color:#a3a3a3;font-size:13px">不透明度</span>
<div class="inp" style="left:558px;top:446px;width:98px;height:21px;border-color:#c0c0c0"></div>
<span class="t" style="left:563px;top:449px;color:#6e6e6e;font-size:13px">标准</span>
<svg class="i" style="left:643px;top:454px" width="9" height="5.400" viewBox="0 0 10 6" fill="none" stroke="#a6a6a6" stroke-width="1.100"><path d="M.500 .500l4.500 4.500 4.500-4.500"/></svg>
<div class="b" style="left:665px;top:455px;width:55px;height:7px;background:#e7eaea;border:1px solid #d6d6d6"></div>
<div class="abs" style="left:718px;top:450px;width:7px;height:16px;background:#c9c9c9"></div>
<div class="inp" style="left:730px;top:450px;width:26px;height:17px;border-color:#c4c4c4"></div>
<span class="t" style="left:733px;top:451px;color:#6e6e6e;font-size:11.500px">100</span>
<span class="t" style="left:758px;top:451px;color:#8a8a8a;font-size:10.500px">%</span>
<div class="abs" style="left:552px;top:468px;width:220px;height:1px;background:#a8a8a8"></div>
<div class="abs" style="left:552px;top:537px;width:220px;height:1px;background:#c4c4c4"></div>
<svg class="i" style="left:557px;top:543.5px" width="10.500" height="11" viewBox="0 0 11 12" fill="none" stroke="#b0b0b0" stroke-width="1.050"><path d="M.500 .500h6l4 4v7h-10z" fill="#fff"/><path d="M6.500 .500v4h4"/></svg><svg class="i" style="left:576px;top:543.5px" width="10.500" height="11" viewBox="0 0 11 12" fill="none" stroke="#b0b0b0" stroke-width="1.050"><path d="M.500 .500h6l4 4v7h-10z" fill="#fff"/><path d="M6.500 .500v4h4"/><path d="M2 7h5M5 5l2 2-2 2"/></svg><svg class="i" style="left:594px;top:543.500px" width="11.500" height="10.500" viewBox="0 0 13 12" fill="none" stroke="#b0b0b0"><path d="M.500 1.500v10"/><path d="M2.500 .500h6l4 4v7h-10z" fill="#fff"/><path d="M8.500 .500v4h4"/></svg><svg class="i" style="left:614px;top:543.5px" width="10.500" height="11" viewBox="0 0 11 12" fill="none" stroke="#b0b0b0" stroke-width="1.050"><path d="M.500 .500h6l4 4v7h-10z" fill="#fff"/><path d="M6.500 .500v4h4"/><path d="M2 4l6 6M2 4h4M2 4v4"/></svg><svg class="i" style="left:633px;top:544px" width="10" height="10" viewBox="0 0 10 10" stroke="#b0b0b0" stroke-width="1.500"><path d="M1 1l8 8M9 1l-8 8"/></svg><div class="vs" style="left:653px;top:540px;height:16px;background:#c4c4c4"></div><svg class="i" style="left:662px;top:543.500px" width="9.500" height="10" viewBox="0 0 10 11" fill="none" stroke="#a6a6a6" stroke-width="2"><path d="M5 0v9.500M1 5.500l4 4 4-4"/></svg><svg class="i" style="left:681px;top:543.500px" width="9.500" height="10" viewBox="0 0 10 11" fill="none" stroke="#a6a6a6" stroke-width="2"><path d="M5 11V1.500M1 5.500l4-4 4 4"/></svg><div class="vs" style="left:701px;top:540px;height:16px;background:#c4c4c4"></div><svg class="i" style="left:710px;top:543px" width="10" height="10" viewBox="0 0 10 10"><path d="M0 0h10v10H0z" fill="#b0b0b0"/><path d="M5 1.500v6M2.500 5L5 7.800 7.500 5" fill="none" stroke="#fff" stroke-width="1.300"/></svg><svg class="i" style="left:729px;top:543px" width="10" height="10" viewBox="0 0 10 10"><path d="M0 0h10v10H0z" fill="#b0b0b0"/><path d="M5 1.500v7M3 3.500l2-2 2 2M3 6.500l2 2 2-2" fill="none" stroke="#fff" stroke-width="1.200"/></svg>
<div class="tabs" style="top:557px;height:20px"></div>
<div class="tabon" style="top:557px;width:37px;height:20px"></div>
<span class="t" style="left:558px;top:558px;font-size:13px">图层</span>
<span class="t" style="left:596px;top:558px;font-size:13px">历史记录</span>
<span class="t" style="left:660px;top:558px;font-size:13px">动作</span>
<div class="abs" style="left:653px;top:558px;width:1px;height:18px;background:#cacad0"></div>

<!-- status bar -->
<div class="abs" style="left:1px;top:577px;width:771px;height:1px;background:#d7d7d7"></div>
<div class="abs" style="left:1px;top:578px;width:771px;height:18px;background:#f0f0f0"></div>
<div class="vs" style="left:85px;top:579px;height:16px;background:#d0d0d0"></div>
<div class="vs" style="left:170px;top:579px;height:16px;background:#d0d0d0"></div>
<div class="vs" style="left:255px;top:579px;height:16px;background:#d0d0d0"></div>
<svg class="i" style="left:2px;top:582px" width="9" height="9" viewBox="0 0 9 9" stroke="#666" stroke-width="1"><path d="M4.500 0v9M0 4.500h9"/></svg>
<svg class="i" style="left:89px;top:582px" width="9.200" height="10.200" viewBox="0 0 10 11" fill="none" stroke="#555" stroke-width="1"><circle cx="5" cy="2" r="1.400"/><path d="M5 3.500v7M2.500 5.500h5M.700 7c.400 2 2 3.300 4.300 3.300S8.900 9 9.300 7"/></svg>
<svg class="i" style="left:174px;top:582px" width="10" height="10" viewBox="0 0 10 10" fill="none" stroke="#555" stroke-width="1"><path d="M1.500 9V.500H9" /><path d="M3 7.500h5" stroke-dasharray="1 1"/><path d="M7.500 2v5" stroke-dasharray="1 1"/></svg>
<svg class="i" style="left:760px;top:585px" width="9" height="9" viewBox="0 0 9 9" fill="#a9a9a9"><path d="M6 0h2v2H6zM3 3h2v2H3zM6 3h2v2H6zM0 6h2v2H0zM3 6h2v2H3zM6 6h2v2H6z"/></svg>
<!-- window border -->
<div class="b" style="left:0;top:0;width:773px;height:597px;border:1px solid #d1824b"></div>
</body></html>
